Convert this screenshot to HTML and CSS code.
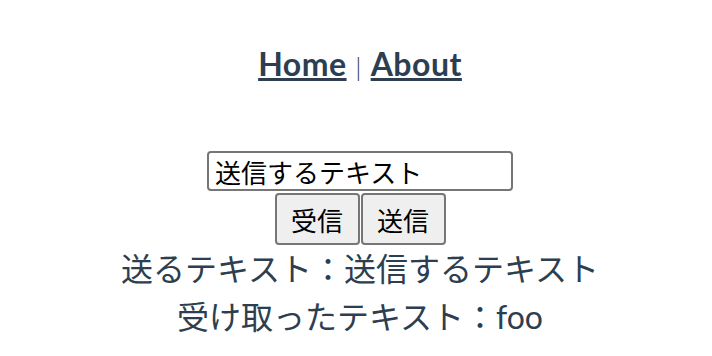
FILE: index.html
```html
<!DOCTYPE html>
<html lang="ja">
<head>
  <meta charset="UTF-8" />
  <meta name="viewport" content="width=device-width, initial-scale=1.0"/>
  <title>Socket</title>
  <link rel="stylesheet" href="styles.css">
</head>
<body>
  <div id="app">
    <div id="nav">
      <a href="#/">Home</a> <span class="sep">|</span> <a href="#/about">About</a>
    </div>

    <div class="home">
      <div class="form-row">
        <input class="text-input" type="text" value="送信するテキスト" />
      </div>
      <div class="button-row">
        <button class="btn">受信</button><button class="btn">送信</button>
      </div>
      <p class="line">送るテキスト：送信するテキスト</p>
      <p class="line">受け取ったテキスト：foo</p>
    </div>
  </div>
</body>
</html>
```

FILE: styles.css
```css
body {
  margin: 0;
  background-color: #fff;
}

#app {
  padding-left: 8px;
  font-family: Lato, "Noto Sans CJK JP", sans-serif;
  text-align: center;
  color: #2c3e50;
}

#nav {
  padding: 44px 0 0;
  height: 107px;
  font-size: 32px;
  line-height: 40px;
  letter-spacing: 0.5px;
}

#nav a {
  font-weight: bold;
  color: #2c3e50;
}

.sep {
  font-size: 26px;
  font-weight: 300;
}

.form-row {
  height: 42px;
}

.text-input {
  width: 306px;
  height: 40px;
  box-sizing: border-box;
  margin: 0;
  padding: 0 6px;
  font-family: "Noto Sans CJK JP", sans-serif;
  font-size: 26px;
  color: #000;
  border: 2px solid #767676;
  border-radius: 4px;
}

.button-row {
  display: flex;
  justify-content: center;
  gap: 1px;
}

.btn {
  width: 85px;
  height: 52px;
  margin: 0;
  font-family: "Noto Sans CJK JP", sans-serif;
  font-size: 26px;
  color: #000;
  background-color: #efefef;
  border: 2px solid #767676;
  border-radius: 4px;
}

.line {
  margin: 0;
  font-size: 32px;
  line-height: 48px;
}
```
